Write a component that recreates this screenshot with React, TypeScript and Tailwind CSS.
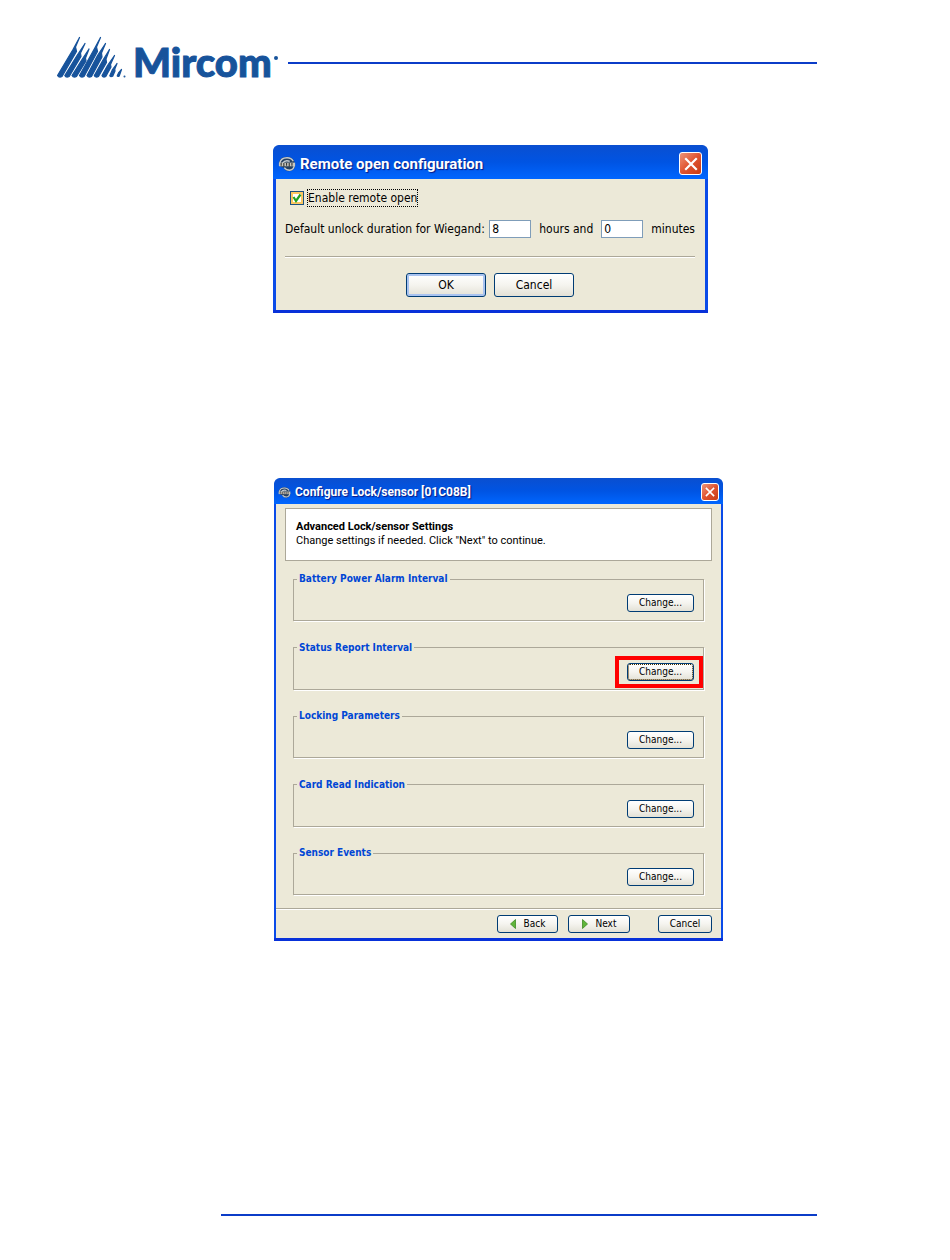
import type { ReactNode } from "react";
import clsx from "clsx";

const sections = [
  { name: "Battery Power Alarm Interval" },
  { name: "Status Report Interval", highlighted: true },
  { name: "Locking Parameters" },
  { name: "Card Read Indication" },
  { name: "Sensor Events" },
];

function LogoMark() {
  return (
    <svg
      viewBox="0 0 70 42"
      className="h-[42px] w-[70px] shrink-0"
      fill="#17539b"
      stroke="#17539b"
      strokeWidth="1.2"
      strokeLinejoin="round"
      aria-hidden="true"
    >
      <path d="M0.5 39.5L16 13.5L22.5 1.5L18.5 11L19.5 15.5L5 40.5Q2 42 0.5 39.5Z" />
      <path d="M7.8 39.5L20 19.5L28 7.5L23.5 17L24 20.5L12.2 40.5Q9 42 7.8 39.5Z" />
      <path d="M15 39.5L25 23.5L32 13L28.5 22L29 25L19.5 40.5Q16.5 42 15 39.5Z" />
      <path d="M22.5 39.5L37 13.5L43.5 1.5L39.5 11L40.5 15.5L27 40.5Q24 42 22.5 39.5Z" />
      <path d="M30 39.5L40.5 19.5L48.5 7.5L44.5 17L45 21L34.5 40.5Q31.5 42 30 39.5Z" />
      <path d="M37.3 39.5L46 24L52.5 13.5L49 23L49.5 26.5L41.5 40.5Q38.5 42 37.3 39.5Z" />
      <path d="M45 39.5L50.5 29.5L57.5 19.5L53.5 28.5L54 31L48.8 40.5Q46 42 45 39.5Z" />
      <path d="M52.8 39.8L55.5 33.5L60 27.5L57.8 33L58 35L55.7 40.3Q53.5 41.2 52.8 39.8Z" />
      <path d="M60.2 40L61.5 37L64.5 33.5L62.2 40Q61 41 60.2 40Z" />
      <circle cx="67.5" cy="40.5" r="0.4" />
    </svg>
  );
}

function AppIcon({ className }: { className: string }) {
  return (
    <svg viewBox="0 0 20 18" className={className} fill="none" aria-hidden="true">
      <path d="M1 8Q2 1 10 1Q16 1 18 6L19 11Q18 17 12 17Q8 17 6 13Q2 13 1 8Z" fill="#27405f" />
      <path d="M2 8Q3 2 10 2Q15 2 17 6M5 8Q8 4 13 6M7 13Q9 16 13 16Q18 15 18 10" stroke="#c5cbd0" strokeWidth="1.6" />
      <path d="M1 9.5h18" stroke="#c9c8c0" strokeWidth="4" />
      <path d="M3.5 8v3M6.5 8v4M9.5 8v3M12.5 8v4M15.5 8v3" stroke="#3a3a3a" strokeWidth="1.3" />
    </svg>
  );
}

function TitleBar({ title, large }: { title: string; large?: boolean }) {
  return (
    <div
      className={clsx(
        "flex items-center rounded-t-md bg-linear-to-b from-[#0a4fd0] via-[#0054e3] to-[#0066ff] font-['Roboto',sans-serif] font-bold text-white",
        large ? "h-[34px] gap-1 pt-[3px] pr-[6px] pl-[5px]" : "h-[26px] gap-1 pt-[2px] pr-1 pl-1",
      )}
    >
      <AppIcon className={large ? "h-[18px] w-[18px]" : "h-[13px] w-[13px]"} />
      <h2
        className={clsx(
          "flex-1 whitespace-nowrap [text-shadow:1px_1px_1px_#0a1883]",
          large ? "text-[15px] leading-5" : "text-[12px] leading-4",
        )}
      >
        {title}
      </h2>
      <button
        type="button"
        aria-label="Close"
        className={clsx(
          "flex items-center justify-center rounded-[3px] border border-white bg-linear-to-br from-[#ee9478] via-[#e0532f] to-[#c73a12]",
          large ? "size-[23px]" : "size-[18px]",
        )}
      >
        <svg viewBox="0 0 14 14" className={large ? "size-[14px]" : "size-[10px]"} aria-hidden="true">
          <path d="M2 2l10 10M12 2L2 12" stroke="#fff" strokeWidth="2.2" strokeLinecap="square" />
        </svg>
      </button>
    </div>
  );
}

function XpButton({
  children,
  className,
  label,
}: {
  children: ReactNode;
  className: string;
  label?: string;
}) {
  return (
    <button
      type="button"
      aria-label={label}
      className={clsx(
        "flex items-center justify-center rounded-[3px] border border-[#003c74] bg-linear-to-b from-white via-[#f5f4ef] to-[#e3e1d6] whitespace-nowrap text-black",
        className,
      )}
    >
      {children}
    </button>
  );
}

function Arrow({ left }: { left?: boolean }) {
  return (
    <svg viewBox="0 0 6 10" className="h-[10px] w-[6px]" aria-hidden="true">
      <path d={left ? "M5.5 0.5v9L0.5 5z" : "M0.5 0.5v9L5.5 5z"} fill="#5fb53a" stroke="#3d8a25" strokeWidth="0.8" />
    </svg>
  );
}

function RemoteOpenDialog() {
  return (
    <section className="w-full max-w-[435px] rounded-t-lg border-b-[3px] border-[#0831d9] bg-[#0a4be8] font-['DejaVu_Sans_Condensed','DejaVu_Sans',sans-serif] text-[12px] leading-4 text-black">
      <TitleBar title="Remote open configuration" large />
      <div className="mx-[3px] bg-[#ece9d8] pt-[11px] pr-[10px] pb-[13px] pl-[9px]">
        <label className="ml-[5px] flex w-fit items-center gap-1">
          <span className="relative flex">
            <input
              type="checkbox"
              defaultChecked
              className="size-[14px] appearance-none border border-[#1c5180] bg-white shadow-[inset_0_0_0_2px_#fbc761]"
            />
            <svg viewBox="0 0 14 14" className="pointer-events-none absolute inset-0 size-[14px]" aria-hidden="true">
              <path d="M3.5 6l2.5 4 4.5-6.5" fill="none" stroke="#21a121" strokeWidth="2.2" />
            </svg>
          </span>
          <span className="outline-1 outline-black outline-dotted">Enable remote open</span>
        </label>
        <div className="mt-[14px] flex items-center whitespace-nowrap">
          <label htmlFor="hours" className="flex-1">
            Default unlock duration for Wiegand:
          </label>
          <input
            id="hours"
            defaultValue="8"
            className="h-[18px] w-[42px] border border-[#7f9db9] bg-white px-[2px]"
          />
          <label htmlFor="hours" className="ml-2">
            hours and
          </label>
          <input
            id="minutes"
            defaultValue="0"
            className="ml-2 h-[18px] w-[42px] border border-[#7f9db9] bg-white px-[2px]"
          />
          <label htmlFor="minutes" className="ml-2">
            minutes
          </label>
        </div>
        <hr className="mt-[18px] border-t border-b border-t-[#aca899] border-b-white" />
        <div className="mt-[15px] flex justify-center gap-2">
          <XpButton className="h-6 w-20 shadow-[inset_0_0_0_2px_#a9c3f0]">OK</XpButton>
          <XpButton className="h-6 w-20">Cancel</XpButton>
        </div>
      </div>
    </section>
  );
}

function LockSensorDialog() {
  return (
    <section className="ml-px w-full max-w-[449px] rounded-t-lg border-b-[3px] border-[#0831d9] bg-[#0a4be8] font-['DejaVu_Sans_Condensed','DejaVu_Sans',sans-serif] text-[10px] leading-3 text-black">
      <TitleBar title="Configure Lock/sensor [01C08B]" />
      <div className="mx-[2px] bg-[#ece9d8]">
        <div className="px-[9px] pt-1">
          <div className="h-[53px] border border-[#aca899] bg-white px-[10px] pt-[11px] font-['Roboto',sans-serif] text-[11px] leading-[14px]">
            <h3 className="font-bold">Advanced Lock/sensor Settings</h3>
            <p>Change settings if needed. Click &quot;Next&quot; to continue.</p>
          </div>
        </div>
        <div className="flex min-h-[347px] flex-col justify-between px-[17px] pt-3 pb-[13px]">
          {sections.map((section) => (
            <fieldset
              key={section.name}
              className="border border-[#aca899] pr-[9px] pb-2 pl-[3px] shadow-[1px_1px_0_#fff]"
            >
              <legend className="px-[2px] text-[10px] leading-3 font-bold text-[#0046d5]">{section.name}</legend>
              <div className="flex justify-end pt-[9px]">
                <div className="relative">
                  <XpButton
                    label={`Change ${section.name}`}
                    className={clsx(
                      "h-[18px] w-[67px]",
                      section.highlighted && "outline-1 -outline-offset-2 outline-[#4a3000] outline-dotted",
                    )}
                  >
                    Change...
                  </XpButton>
                  {section.highlighted && (
                    <span className="pointer-events-none absolute -inset-y-[7px] -right-[9px] -left-3 border-4 border-[#ff0000]" />
                  )}
                </div>
              </div>
            </fieldset>
          ))}
        </div>
        <div className="flex justify-end border-t border-[#aca899] pt-[6px] pr-[9px] pb-[5px] shadow-[inset_0_1px_0_#fff]">
          <XpButton className="h-[18px] w-[61px] gap-2">
            <Arrow left />
            Back
          </XpButton>
          <XpButton className="ml-[10px] h-[18px] w-[62px] gap-2">
            <Arrow />
            Next
          </XpButton>
          <XpButton className="ml-7 h-[18px] w-[54px]">Cancel</XpButton>
        </div>
      </div>
    </section>
  );
}

export default function App() {
  return (
    <div className="min-h-screen bg-white pr-[133px]">
      <header className="flex pt-9 pl-[57px]">
        <LogoMark />
        <h1 className="flex pt-[2px] pl-[6px] font-['Lato',sans-serif] text-[40px] leading-[48px] font-black text-[#17539b] [-webkit-text-stroke:1px_#17539b]">
          Mircom
          <span className="mt-[18px] ml-[2px] size-1 rounded-full bg-[#17539b]" />
        </h1>
        <div className="mt-[26px] ml-[10px] h-[2px] flex-1 bg-[#0b3cc8]" />
      </header>
      <main className="flex flex-col gap-[165px] pt-[59px] pl-[273px]">
        <RemoteOpenDialog />
        <LockSensorDialog />
      </main>
      <footer className="mt-[273px] ml-[221px] h-[2px] bg-[#0b3cc8]" />
    </div>
  );
}
